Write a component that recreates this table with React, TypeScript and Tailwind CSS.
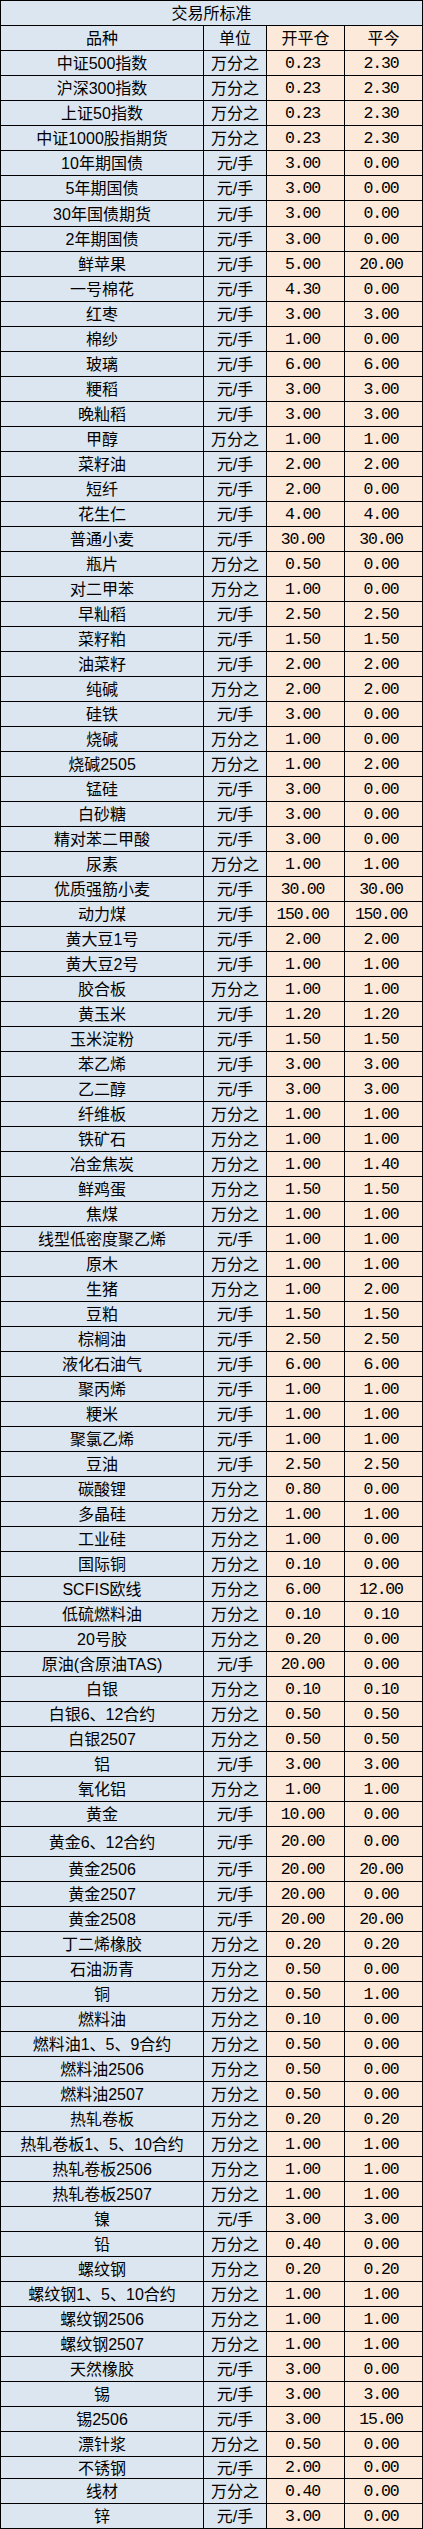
import React from "react";

type Row = [string, string, string, string, number?];

const rows: Row[] = [
  ["中证500指数", "万分之", "0.23", "2.30"],
  ["沪深300指数", "万分之", "0.23", "2.30"],
  ["上证50指数", "万分之", "0.23", "2.30"],
  ["中证1000股指期货", "万分之", "0.23", "2.30"],
  ["10年期国债", "元/手", "3.00", "0.00"],
  ["5年期国债", "元/手", "3.00", "0.00"],
  ["30年国债期货", "元/手", "3.00", "0.00", 26],
  ["2年期国债", "元/手", "3.00", "0.00"],
  ["鲜苹果", "元/手", "5.00", "20.00"],
  ["一号棉花", "元/手", "4.30", "0.00"],
  ["红枣", "元/手", "3.00", "3.00"],
  ["棉纱", "元/手", "1.00", "0.00"],
  ["玻璃", "元/手", "6.00", "6.00"],
  ["粳稻", "元/手", "3.00", "3.00"],
  ["晚籼稻", "元/手", "3.00", "3.00"],
  ["甲醇", "万分之", "1.00", "1.00"],
  ["菜籽油", "元/手", "2.00", "2.00"],
  ["短纤", "元/手", "2.00", "0.00"],
  ["花生仁", "元/手", "4.00", "4.00"],
  ["普通小麦", "元/手", "30.00", "30.00"],
  ["瓶片", "万分之", "0.50", "0.00"],
  ["对二甲苯", "万分之", "1.00", "0.00"],
  ["早籼稻", "元/手", "2.50", "2.50"],
  ["菜籽粕", "元/手", "1.50", "1.50"],
  ["油菜籽", "元/手", "2.00", "2.00"],
  ["纯碱", "万分之", "2.00", "2.00"],
  ["硅铁", "元/手", "3.00", "0.00"],
  ["烧碱", "万分之", "1.00", "0.00"],
  ["烧碱2505", "万分之", "1.00", "2.00"],
  ["锰硅", "元/手", "3.00", "0.00"],
  ["白砂糖", "元/手", "3.00", "0.00"],
  ["精对苯二甲酸", "元/手", "3.00", "0.00"],
  ["尿素", "万分之", "1.00", "1.00"],
  ["优质强筋小麦", "元/手", "30.00", "30.00"],
  ["动力煤", "元/手", "150.00", "150.00"],
  ["黄大豆1号", "元/手", "2.00", "2.00"],
  ["黄大豆2号", "元/手", "1.00", "1.00"],
  ["胶合板", "万分之", "1.00", "1.00"],
  ["黄玉米", "元/手", "1.20", "1.20"],
  ["玉米淀粉", "元/手", "1.50", "1.50"],
  ["苯乙烯", "元/手", "3.00", "3.00"],
  ["乙二醇", "元/手", "3.00", "3.00"],
  ["纤维板", "万分之", "1.00", "1.00"],
  ["铁矿石", "万分之", "1.00", "1.00"],
  ["冶金焦炭", "万分之", "1.00", "1.40"],
  ["鲜鸡蛋", "万分之", "1.50", "1.50"],
  ["焦煤", "万分之", "1.00", "1.00"],
  ["线型低密度聚乙烯", "元/手", "1.00", "1.00"],
  ["原木", "万分之", "1.00", "1.00"],
  ["生猪", "万分之", "1.00", "2.00"],
  ["豆粕", "元/手", "1.50", "1.50"],
  ["棕榈油", "元/手", "2.50", "2.50"],
  ["液化石油气", "元/手", "6.00", "6.00"],
  ["聚丙烯", "元/手", "1.00", "1.00"],
  ["粳米", "元/手", "1.00", "1.00"],
  ["聚氯乙烯", "元/手", "1.00", "1.00"],
  ["豆油", "元/手", "2.50", "2.50"],
  ["碳酸锂", "万分之", "0.80", "0.00"],
  ["多晶硅", "万分之", "1.00", "1.00"],
  ["工业硅", "万分之", "1.00", "0.00"],
  ["国际铜", "万分之", "0.10", "0.00"],
  ["SCFIS欧线", "万分之", "6.00", "12.00"],
  ["低硫燃料油", "万分之", "0.10", "0.10"],
  ["20号胶", "万分之", "0.20", "0.00"],
  ["原油(含原油TAS)", "元/手", "20.00", "0.00"],
  ["白银", "万分之", "0.10", "0.10"],
  ["白银6、12合约", "万分之", "0.50", "0.50"],
  ["白银2507", "万分之", "0.50", "0.50"],
  ["铝", "元/手", "3.00", "3.00"],
  ["氧化铝", "万分之", "1.00", "1.00"],
  ["黄金", "元/手", "10.00", "0.00"],
  ["黄金6、12合约", "元/手", "20.00", "0.00", 30],
  ["黄金2506", "元/手", "20.00", "20.00"],
  ["黄金2507", "元/手", "20.00", "0.00"],
  ["黄金2508", "元/手", "20.00", "20.00"],
  ["丁二烯橡胶", "万分之", "0.20", "0.20"],
  ["石油沥青", "万分之", "0.50", "0.00"],
  ["铜", "万分之", "0.50", "1.00"],
  ["燃料油", "万分之", "0.10", "0.00"],
  ["燃料油1、5、9合约", "万分之", "0.50", "0.00"],
  ["燃料油2506", "万分之", "0.50", "0.00"],
  ["燃料油2507", "万分之", "0.50", "0.00"],
  ["热轧卷板", "万分之", "0.20", "0.20"],
  ["热轧卷板1、5、10合约", "万分之", "1.00", "1.00"],
  ["热轧卷板2506", "万分之", "1.00", "1.00"],
  ["热轧卷板2507", "万分之", "1.00", "1.00"],
  ["镍", "元/手", "3.00", "3.00"],
  ["铅", "万分之", "0.40", "0.00"],
  ["螺纹钢", "万分之", "0.20", "0.20"],
  ["螺纹钢1、5、10合约", "万分之", "1.00", "1.00"],
  ["螺纹钢2506", "万分之", "1.00", "1.00"],
  ["螺纹钢2507", "万分之", "1.00", "1.00"],
  ["天然橡胶", "元/手", "3.00", "0.00"],
  ["锡", "元/手", "3.00", "3.00"],
  ["锡2506", "元/手", "3.00", "15.00"],
  ["漂针浆", "万分之", "0.50", "0.00"],
  ["不锈钢", "元/手", "2.00", "0.00", 22],
  ["线材", "万分之", "0.40", "0.00"],
  ["锌", "元/手", "3.00", "0.00"],
];

const sans = "font-['Liberation_Sans','Noto_Sans_CJK_SC',sans-serif]";
const mono = "font-['Liberation_Mono','Noto_Sans_CJK_SC',monospace]";

export default function App() {
  return (
    <div className="w-[423px] bg-white">
      <div className={`w-[423px] border-t border-l border-black text-black ${sans}`}>
        <div className="h-[25px] flex items-center justify-center bg-[#dce6f1] border-r border-b border-black text-[16px] leading-none pt-[1px]">
          交易所标准
        </div>
        <div className="grid grid-cols-[203px_63px_78px_78px] h-[25px] text-[16px] leading-none">
          <div className="flex items-center justify-center bg-[#dce6f1] border-r border-b border-black pt-[1px]">品种</div>
          <div className="flex items-center justify-center bg-[#dce6f1] border-r border-b border-black pt-[1px]">单位</div>
          <div className="flex items-center justify-center bg-[#fde9d9] border-r border-b border-black pt-[1px]">开平仓</div>
          <div className="flex items-center justify-center bg-[#fde9d9] border-r border-b border-black pt-[1px]">平今</div>
        </div>
        {rows.map((r, i) => (
          <div
            key={i}
            className="grid grid-cols-[203px_63px_78px_78px] leading-none"
            style={{ height: `${r[4] ?? 25}px` }}
          >
            <div className="flex items-center justify-center bg-[#dce6f1] border-r border-b border-black text-[16px] pt-[2px] whitespace-nowrap">
              {r[0]}
            </div>
            <div className="flex items-center justify-center bg-[#dce6f1] border-r border-b border-black text-[16px] pt-[2px] whitespace-nowrap">
              {r[1]}
            </div>
            <div className={`flex items-center justify-center bg-[#fde9d9] border-r border-b border-black text-[16.5px] tracking-[-1.2px] pt-[2px] pr-[6px] ${mono}`}>
              {r[2]}
            </div>
            <div className={`flex items-center justify-center bg-[#fde9d9] border-r border-b border-black text-[16.5px] tracking-[-1.2px] pt-[2px] pr-[5px] ${mono}`}>
              {r[3]}
            </div>
          </div>
        ))}
      </div>
    </div>
  );
}
